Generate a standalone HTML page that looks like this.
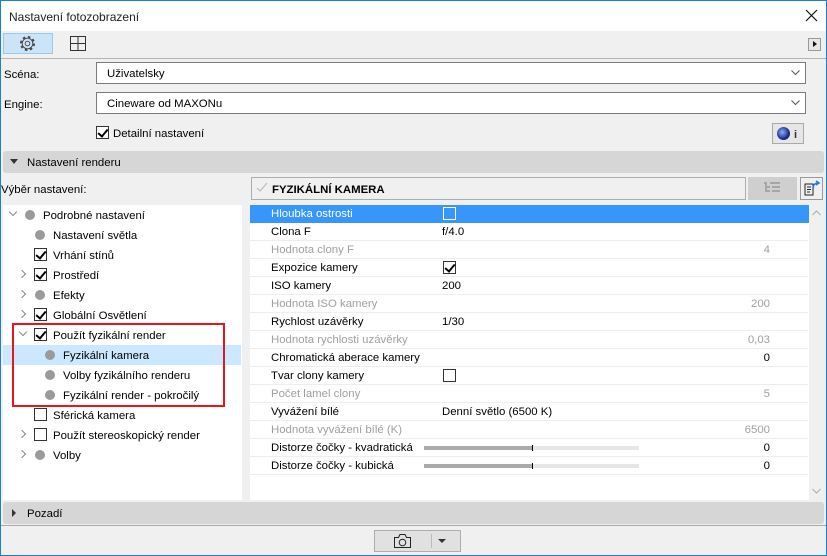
<!DOCTYPE html>
<html><head><meta charset="utf-8">
<style>
*{box-sizing:border-box;margin:0;padding:0}
body{width:827px;height:556px;overflow:hidden;background:#f0f0f0;font-family:"Liberation Sans",sans-serif;font-size:11.4px;color:#000;position:relative}
.a{position:absolute}
.t{position:absolute;white-space:nowrap;line-height:14px;padding-top:1px}
.cb{position:absolute;width:13px;height:13px;border:1px solid #333;background:#fff}
.cb.on::after{content:"";position:absolute;left:3px;top:0px;width:4px;height:8px;border:solid #000;border-width:0 2px 2px 0;transform:rotate(40deg)}
.dot{position:absolute;width:10px;height:10px;border-radius:50%;background:#9a9a9a}
.arr{position:absolute;width:6px;height:6px;border:solid #8a8a8a;border-width:0 1.5px 1.5px 0}
.r{position:absolute;left:250px;width:558px;height:18px;border-bottom:1px solid #eee}
.r .l{position:absolute;left:21px;top:3px;white-space:nowrap}
.r .v{position:absolute;left:192px;top:3px;white-space:nowrap}
.r .n{position:absolute;right:38px;top:3px}
.g{color:#a0a0a0}
</style></head><body>
<div class="a" style="left:0;top:0;width:827px;height:556px;border:1px solid #1a7fd6;z-index:10;pointer-events:none"></div>
<div class="a" style="left:0;top:0;width:827px;height:31px;background:#fff"></div>
<div class="t" style="left:9px;top:9px;color:#222;font-size:12px">Nastavení fotozobrazení</div>
<svg class="a" style="left:805px;top:9px" width="13" height="13"><path d="M1 1L12 12M12 1L1 12" stroke="#111" stroke-width="1.2"/></svg>
<div class="a" style="left:3px;top:33px;width:50px;height:21px;background:#cce4f7;border:1px solid #99c9ef"></div>
<svg class="a" style="left:19px;top:35px" width="17" height="17" viewBox="0 0 17 17"><circle cx="8.5" cy="8.5" r="6.6" fill="none" stroke="#444" stroke-width="1.8" stroke-dasharray="2.6 2.6"/><circle cx="8.5" cy="8.5" r="5.3" fill="#cce4f7" stroke="#444" stroke-width="0.9"/><circle cx="8.5" cy="8.5" r="2.3" fill="none" stroke="#444" stroke-width="0.9"/></svg>
<svg class="a" style="left:70px;top:36px" width="16" height="15"><rect x=".5" y=".5" width="15" height="14" fill="none" stroke="#333"/><path d="M8 1v13M1 7.5h14" stroke="#333"/></svg>
<div class="a" style="left:808px;top:38px;width:13px;height:13px;border:1px solid #999;background:#e8e8e8"></div>
<div class="a" style="left:813px;top:41px;border-left:4px solid #111;border-top:3.5px solid transparent;border-bottom:3.5px solid transparent"></div>
<div class="a" style="left:0;top:58px;width:827px;height:1px;background:#b5b5b5"></div>
<div class="t" style="left:4px;top:67px">Scéna:</div>
<div class="a" style="left:96px;top:62px;width:710px;height:22px;background:#fff;border:1px solid #7a7a7a"></div>
<div class="t" style="left:107px;top:66px">Uživatelsky</div>
<div class="t" style="left:4px;top:97px">Engine:</div>
<div class="a" style="left:96px;top:92px;width:710px;height:22px;background:#fff;border:1px solid #7a7a7a"></div>
<div class="t" style="left:107px;top:96px">Cineware od MAXONu</div>
<svg class="a" style="left:791px;top:70px" width="9" height="6"><path d="M.5 .5L4.5 4.5L8.5 .5" fill="none" stroke="#555"/></svg>
<svg class="a" style="left:791px;top:100px" width="9" height="6"><path d="M.5 .5L4.5 4.5L8.5 .5" fill="none" stroke="#555"/></svg>
<div class="cb on" style="left:96px;top:126px"></div>
<div class="t" style="left:113px;top:126px">Detailní nastavení</div>
<div class="a" style="left:772px;top:123px;width:32px;height:21px;border:1px solid #aaa;background:#e6e6e6"></div>
<div class="a" style="left:777px;top:127px;width:13px;height:13px;border-radius:50%;background:radial-gradient(circle at 40% 40%,#8fb0ff,#1b2c8a 60%,#0a1030)"></div>
<div class="t" style="left:794px;top:127px;font-weight:bold;font-size:11px;color:#333">i</div>
<div class="a" style="left:3px;top:151px;width:821px;height:22px;background:#d6d6d6;border-radius:3px"></div>
<div class="a" style="left:10px;top:159px;border-top:5px solid #333;border-left:4px solid transparent;border-right:4px solid transparent"></div>
<div class="t" style="left:27px;top:155px">Nastavení renderu</div>
<div class="t" style="left:1px;top:182px">Výběr nastavení:</div>
<div class="a" style="left:251px;top:177px;width:495px;height:23px;border:1px solid #adadad;background:#f0f0f0"></div>
<svg class="a" style="left:256px;top:182px" width="12" height="12"><path d="M1 6l3 3 7-8" fill="none" stroke="#bbb" stroke-width="1.2"/></svg>
<div class="t" style="left:272px;top:182px;font-weight:bold">FYZIKÁLNÍ KAMERA</div>
<div class="a" style="left:748px;top:177px;width:49px;height:23px;background:#cfcfcf"></div>
<svg class="a" style="left:763px;top:182px" width="18" height="12"><path d="M1 1h3M7 1h10M4 5h3M9 5h8M4 9h3M9 9h8M3 2v8" stroke="#999" stroke-width="1.5"/></svg>
<div class="a" style="left:800px;top:177px;width:23px;height:23px;border:1px solid #999;background:#f0f0f0"></div>
<svg class="a" style="left:803px;top:179px" width="18" height="18"><path d="M2 5h8v11H2z" fill="none" stroke="#222"/><path d="M4 8h4M4 10.5h4M4 13h3" stroke="#222"/><path d="M10 10c0-4 2-6 5-6M13 2l3 2-3 2" fill="none" stroke="#2a7ae2" stroke-width="1.6"/></svg>
<!-- left panel -->
<div class="a" style="left:3px;top:205px;width:239px;height:295px;background:#fff"></div>
<div class="a" style="left:3px;top:345px;width:238px;height:20px;background:#cce8ff"></div>
<div class="arr" style="left:10px;top:209px;transform:rotate(45deg)"></div>
<div class="dot" style="left:25px;top:210px"></div><div class="t" style="left:43px;top:208px">Podrobné nastavení</div>
<div class="dot" style="left:35px;top:230px"></div><div class="t" style="left:53px;top:228px">Nastavení světla</div>
<div class="cb on" style="left:34px;top:248px"></div><div class="t" style="left:53px;top:248px">Vrhání stínů</div>
<div class="arr" style="left:19px;top:271px;transform:rotate(-45deg)"></div>
<div class="cb on" style="left:34px;top:268px"></div><div class="t" style="left:53px;top:268px">Prostředí</div>
<div class="arr" style="left:19px;top:291px;transform:rotate(-45deg)"></div>
<div class="dot" style="left:35px;top:290px"></div><div class="t" style="left:53px;top:288px">Efekty</div>
<div class="arr" style="left:19px;top:311px;transform:rotate(-45deg)"></div>
<div class="cb on" style="left:34px;top:308px"></div><div class="t" style="left:53px;top:308px">Globální Osvětlení</div>
<div class="arr" style="left:20px;top:329px;transform:rotate(45deg)"></div>
<div class="cb on" style="left:34px;top:328px"></div><div class="t" style="left:53px;top:328px">Použít fyzikální render</div>
<div class="dot" style="left:45px;top:350px"></div><div class="t" style="left:63px;top:348px">Fyzikální kamera</div>
<div class="dot" style="left:45px;top:370px"></div><div class="t" style="left:63px;top:368px">Volby fyzikálního renderu</div>
<div class="dot" style="left:45px;top:390px"></div><div class="t" style="left:63px;top:388px">Fyzikální render - pokročilý</div>
<div class="cb" style="left:34px;top:408px"></div><div class="t" style="left:53px;top:408px">Sférická kamera</div>
<div class="arr" style="left:19px;top:431px;transform:rotate(-45deg)"></div>
<div class="cb" style="left:34px;top:428px"></div><div class="t" style="left:53px;top:428px">Použít stereoskopický render</div>
<div class="arr" style="left:19px;top:451px;transform:rotate(-45deg)"></div>
<div class="dot" style="left:35px;top:450px"></div><div class="t" style="left:53px;top:448px">Volby</div>
<div class="a" style="left:12px;top:323px;width:213px;height:84px;border:2px solid #e8161b"></div>
<!-- right panel -->
<div class="a" style="left:250px;top:205px;width:573px;height:295px;background:#fff"></div>
<div class="a" style="left:809px;top:205px;width:14px;height:295px;background:#f0f0f0"></div>
<svg class="a" style="left:812px;top:210px" width="9" height="6"><path d="M.5 5L4.5 1L8.5 5" fill="none" stroke="#aaa"/></svg>
<svg class="a" style="left:812px;top:488px" width="9" height="6"><path d="M.5 1L4.5 5L8.5 1" fill="none" stroke="#aaa"/></svg>
<div class="r" style="top:205px;background:#3796fb;border:none;height:18px;width:559px"><span class="l" style="color:#fff">Hloubka ostrosti</span><div class="a" style="left:193px;top:2px;width:13px;height:13px;border:1px solid #fff"></div></div>
<div class="r" style="top:223px"><span class="l">Clona F</span><span class="v">f/4.0</span></div>
<div class="r g" style="top:241px"><span class="l">Hodnota clony F</span><span class="n">4</span></div>
<div class="r" style="top:259px"><span class="l">Expozice kamery</span><div class="cb on" style="left:193px;top:2px"></div></div>
<div class="r" style="top:277px"><span class="l">ISO kamery</span><span class="v">200</span></div>
<div class="r g" style="top:295px"><span class="l">Hodnota ISO kamery</span><span class="n">200</span></div>
<div class="r" style="top:313px"><span class="l">Rychlost uzávěrky</span><span class="v">1/30</span></div>
<div class="r g" style="top:331px"><span class="l">Hodnota rychlosti uzávěrky</span><span class="n">0,03</span></div>
<div class="r" style="top:349px"><span class="l">Chromatická aberace kamery</span><span class="n">0</span></div>
<div class="r" style="top:367px"><span class="l">Tvar clony kamery</span><div class="cb" style="left:193px;top:2px"></div></div>
<div class="r g" style="top:385px"><span class="l">Počet lamel clony</span><span class="n">5</span></div>
<div class="r" style="top:403px"><span class="l">Vyvážení bílé</span><span class="v">Denní světlo (6500 K)</span></div>
<div class="r g" style="top:421px"><span class="l">Hodnota vyvážení bílé (K)</span><span class="n">6500</span></div>
<div class="r" style="top:439px"><span class="l">Distorze čočky - kvadratická</span><span class="n">0</span>
<div class="a" style="left:174px;top:7px;width:215px;height:4px;background:#e6e6e6"></div><div class="a" style="left:174px;top:7px;width:108px;height:4px;background:#aaa"></div><div class="a" style="left:282px;top:6px;width:1px;height:6px;background:#000"></div></div>
<div class="r" style="top:457px"><span class="l">Distorze čočky - kubická</span><span class="n">0</span>
<div class="a" style="left:174px;top:7px;width:215px;height:4px;background:#e6e6e6"></div><div class="a" style="left:174px;top:7px;width:108px;height:4px;background:#aaa"></div><div class="a" style="left:282px;top:6px;width:1px;height:6px;background:#000"></div></div>
<!-- bottom -->
<div class="a" style="left:3px;top:502px;width:821px;height:22px;background:#d6d6d6;border-radius:3px"></div>
<div class="a" style="left:12px;top:509px;border-left:4px solid #333;border-top:4px solid transparent;border-bottom:4px solid transparent"></div>
<div class="t" style="left:27px;top:506px">Pozadí</div>
<div class="a" style="left:0;top:525px;width:827px;height:1px;background:#a8a8a8"></div>
<div class="a" style="left:374px;top:530px;width:87px;height:22px;background:#e1e1e1;border:1px solid #adadad"></div>
<svg class="a" style="left:393px;top:533px" width="19" height="16"><path d="M1.5 4.5h4l1.5-3h5l1.5 3h4v10h-16z" fill="none" stroke="#222"/><circle cx="9.5" cy="9.5" r="3.3" fill="none" stroke="#222"/></svg>
<div class="a" style="left:431px;top:534px;width:1px;height:14px;background:#bbb"></div>
<div class="a" style="left:438px;top:539px;border-top:4px solid #333;border-left:4px solid transparent;border-right:4px solid transparent"></div>
</body></html>
